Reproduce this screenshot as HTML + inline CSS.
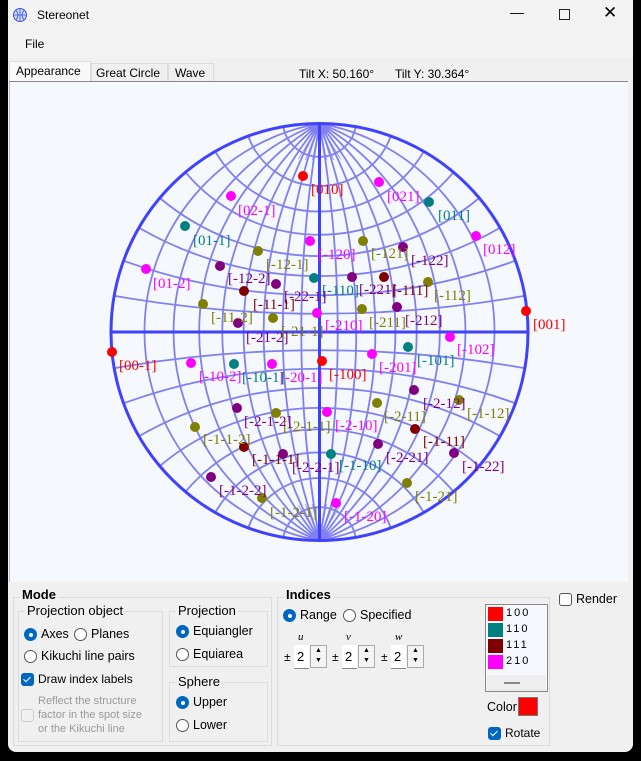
<!DOCTYPE html>
<html><head><meta charset="utf-8"><style>
*{margin:0;padding:0;box-sizing:border-box}
body{width:641px;height:761px;background:#000;position:relative;overflow:hidden;font-family:"Liberation Sans",sans-serif;font-size:12px;color:#000}
.a{position:absolute;white-space:nowrap}
.win{position:absolute;left:8px;top:0;width:625px;height:752px;background:#f0f0f0;border-radius:0 0 8px 8px}
.rad{position:absolute;width:13px;height:13px;border:1px solid #555;border-radius:50%;background:#fff}
.rad.on{background:#0067c0;border-color:#0067c0}
.rad.on::after{content:"";position:absolute;left:3.5px;top:3.5px;width:4px;height:4px;border-radius:50%;background:#fff}
.chk{position:absolute;width:13px;height:13px;border-radius:3px;background:#0067c0}
.chk::after{content:"";position:absolute;left:4px;top:2px;width:3px;height:6px;border:solid #fff;border-width:0 1.3px 1.3px 0;transform:rotate(45deg)}
.grp{position:absolute;border:1px solid #dcdcdc}
.lg{position:absolute;background:#f0f0f0;padding:0 2px;font-size:13px}
.sp{position:absolute;width:15px;height:24px;background:#fff;border-bottom:1px solid #888;font-size:13px;padding:4px 0 0 3px}
.sb{position:absolute;width:17px;height:23px;border:1px solid #aaa;background:#f4f4f4;font-size:7px;text-align:center;line-height:10px}
</style></head><body>
<div class="win"></div>
<div class="a" style="left:8px;top:0;width:625px;height:58px;background:#f3f3f3"></div>
<svg class="a" style="left:12px;top:7px" width="16" height="16" viewBox="0 0 16 16"><circle cx="8" cy="8" r="6.5" fill="#c8d8ff" stroke="#4055d0"/><path d="M8 1.5V14.5M1.5 8H14.5M4 3.5Q8 8 4 12.5M12 3.5Q8 8 12 12.5" stroke="#4055d0" fill="none" stroke-width=".8"/></svg>
<div class="a" style="left:37px;top:8px;font-size:12px">Stereonet</div>
<div class="a" style="left:510px;top:4px;font-size:14px">&#8212;</div>
<div class="a" style="left:559px;top:9px;width:11px;height:11px;border:1px solid #222"></div>
<div class="a" style="left:603px;top:3px;font-size:17px">&#10005;</div>
<div class="a" style="left:25px;top:37px;font-size:12px">File</div>
<div class="a" style="left:9px;top:61px;width:82px;height:21px;background:#f9f9f9;border:1px solid #ddd;border-bottom:none"></div>
<div class="a" style="left:16px;top:64px;font-size:12px">Appearance</div>
<div class="a" style="left:91px;top:63px;width:77px;height:18px;border:1px solid #ddd;border-bottom:none"></div>
<div class="a" style="left:96px;top:66px">Great Circle</div>
<div class="a" style="left:168px;top:63px;width:46px;height:18px;border:1px solid #ddd;border-bottom:none"></div>
<div class="a" style="left:175px;top:66px">Wave</div>
<div class="a" style="left:299px;top:67px">Tilt X: 50.160°</div>
<div class="a" style="left:395px;top:67px">Tilt Y: 30.364°</div>
<div class="a" style="left:9px;top:81px;width:619px;height:501px;background:#f5f8fd;border-top:1px solid #888;border-left:1px solid #bbb"></div>
<svg class="a" style="left:0;top:0" width="641" height="600">
<g transform="translate(319.5,332)" fill="none" stroke="#8080f0" stroke-width="1.8">
<path d="M0,-208.5A1200.7,1200.7 0 0 1 0,208.5M0,-208.5A609.6,609.6 0 0 1 0,208.5M0,-208.5A417,417 0 0 1 0,208.5M0,-208.5A324.4,324.4 0 0 1 0,208.5M0,-208.5A272.2,272.2 0 0 1 0,208.5M0,-208.5A240.8,240.8 0 0 1 0,208.5M0,-208.5A221.9,221.9 0 0 1 0,208.5M0,-208.5A211.7,211.7 0 0 1 0,208.5"/>
<path d="M0,-208.5A1200.7,1200.7 0 0 0 0,208.5M0,-208.5A609.6,609.6 0 0 0 0,208.5M0,-208.5A417,417 0 0 0 0,208.5M0,-208.5A324.4,324.4 0 0 0 0,208.5M0,-208.5A272.2,272.2 0 0 0 0,208.5M0,-208.5A240.8,240.8 0 0 0 0,208.5M0,-208.5A221.9,221.9 0 0 0 0,208.5M0,-208.5A211.7,211.7 0 0 0 0,208.5"/>
<path d="M-36.2,205.3A36.8,36.8 0 0 1 36.2,205.3M-71.3,195.9A75.9,75.9 0 0 1 71.3,195.9M-104.25,180.6A120.4,120.4 0 0 1 104.25,180.6M-134,159.7A175,175 0 0 1 134,159.7M-159.7,134A248.5,248.5 0 0 1 159.7,134M-180.6,104.25A361.1,361.1 0 0 1 180.6,104.25M-195.9,71.3A572.9,572.9 0 0 1 195.9,71.3M-205.3,36.2A1182.5,1182.5 0 0 1 205.3,36.2"/>
<path d="M-36.2,-205.3A36.8,36.8 0 0 0 36.2,-205.3M-71.3,-195.9A75.9,75.9 0 0 0 71.3,-195.9M-104.25,-180.6A120.4,120.4 0 0 0 104.25,-180.6M-134,-159.7A175,175 0 0 0 134,-159.7M-159.7,-134A248.5,248.5 0 0 0 159.7,-134M-180.6,-104.25A361.1,361.1 0 0 0 180.6,-104.25M-195.9,-71.3A572.9,572.9 0 0 0 195.9,-71.3M-205.3,-36.2A1182.5,1182.5 0 0 0 205.3,-36.2"/>
<path stroke-width=".7" d="M0,-208.5L-14,-172M0,-208.5L-7,-172M0,-208.5L7,-172M0,-208.5L14,-172M0,-208.5L-21,-173M0,-208.5L21,-173M0,208.5L-14,172M0,208.5L-7,172M0,208.5L7,172M0,208.5L14,172M0,208.5L-21,173M0,208.5L21,173"/>
<circle r="208.5" stroke="#4040ff" stroke-width="3"/>
<path d="M-208.5,0H208.5M0,-208.5V208.5" stroke="#4040ff" stroke-width="3"/>
</g>
<g>
<circle cx="303" cy="176" r="5" fill="#f00"/><circle cx="526" cy="311" r="5" fill="#f00"/><circle cx="112" cy="352" r="5" fill="#f00"/><circle cx="322" cy="361" r="5" fill="#f00"/>
<g fill="#f0f"><circle cx="379" cy="182" r="5"/><circle cx="231" cy="196" r="5"/><circle cx="476" cy="236" r="5"/><circle cx="310" cy="241" r="5"/><circle cx="146" cy="269" r="5"/><circle cx="317" cy="313" r="5"/><circle cx="450" cy="337" r="5"/><circle cx="372" cy="354" r="5"/><circle cx="191" cy="363" r="5"/><circle cx="272" cy="364" r="5"/><circle cx="327" cy="412" r="5"/><circle cx="336" cy="503" r="5"/></g>
<g fill="#008080"><circle cx="429" cy="202" r="5"/><circle cx="185" cy="226" r="5"/><circle cx="314" cy="278" r="5"/><circle cx="408" cy="347" r="5"/><circle cx="234" cy="364" r="5"/><circle cx="331" cy="454" r="5"/></g>
<g fill="#808000"><circle cx="363" cy="241" r="5"/><circle cx="258" cy="251" r="5"/><circle cx="428" cy="282" r="5"/><circle cx="203" cy="304" r="5"/><circle cx="362" cy="309" r="5"/><circle cx="273" cy="318" r="5"/><circle cx="459" cy="400" r="5"/><circle cx="377" cy="403" r="5"/><circle cx="276" cy="413" r="5"/><circle cx="195" cy="427" r="5"/><circle cx="407" cy="483" r="5"/><circle cx="262" cy="498" r="5"/></g>
<g fill="#800080"><circle cx="403" cy="247" r="5"/><circle cx="220" cy="266" r="5"/><circle cx="276" cy="284" r="5"/><circle cx="352" cy="277" r="5"/><circle cx="397" cy="307" r="5"/><circle cx="238" cy="323" r="5"/><circle cx="414" cy="390" r="5"/><circle cx="237" cy="408" r="5"/><circle cx="283" cy="454" r="5"/><circle cx="378" cy="444" r="5"/><circle cx="454" cy="453" r="5"/><circle cx="211" cy="477" r="5"/></g>
<g fill="#800000"><circle cx="384" cy="277" r="5"/><circle cx="244" cy="291" r="5"/><circle cx="415" cy="429" r="5"/><circle cx="244" cy="447" r="5"/></g>
</g>
<g font-family="Liberation Serif,serif" font-size="15" dominant-baseline="central">
<g fill="#f00"><text x="311" y="190">[010]</text><text x="533" y="325">[001]</text><text x="119" y="366">[00-1]</text><text x="329" y="375">[-100]</text></g>
<g fill="#f0f"><text x="387" y="197">[021]</text><text x="238" y="211">[02-1]</text><text x="483" y="250">[012]</text><text x="318" y="255">[-120]</text><text x="153" y="284">[01-2]</text><text x="325" y="326">[-210]</text><text x="457" y="350">[-102]</text><text x="379" y="368">[-201]</text><text x="199" y="377">[-10-2]</text><text x="280" y="378">[-20-1]</text><text x="335" y="426">[-2-10]</text><text x="344" y="517">[-1-20]</text></g>
<g fill="#008080"><text x="438" y="216">[011]</text><text x="193" y="241">[01-1]</text><text x="322" y="291">[-110]</text><text x="417" y="361">[-101]</text><text x="242" y="378">[-10-1]</text><text x="339" y="466">[-1-10]</text></g>
<g fill="#808000"><text x="371" y="254">[-121]</text><text x="266" y="265">[-12-1]</text><text x="434" y="296">[-112]</text><text x="211" y="318">[-11-2]</text><text x="369" y="323">[-211]</text><text x="281" y="332">[-21-1]</text><text x="467" y="414">[-1-12]</text><text x="384" y="417">[-2-11]</text><text x="283" y="427">[-2-1-1]</text><text x="203" y="440">[-1-1-2]</text><text x="415" y="497">[-1-21]</text><text x="270" y="513">[-1-2-1]</text></g>
<g fill="#800080"><text x="411" y="261">[-122]</text><text x="228" y="279">[-12-2]</text><text x="359" y="290">[-221]</text><text x="284" y="297">[-22-1]</text><text x="405" y="321">[-212]</text><text x="246" y="338">[-21-2]</text><text x="423" y="404">[-2-12]</text><text x="244" y="422">[-2-1-2]</text><text x="292" y="468">[-2-2-1]</text><text x="386" y="458">[-2-21]</text><text x="462" y="467">[-1-22]</text><text x="219" y="491">[-1-2-2]</text></g>
<g fill="#800000"><text x="392" y="291">[-111]</text><text x="253" y="305">[-11-1]</text><text x="423" y="442">[-1-11]</text><text x="252" y="460">[-1-1-1]</text></g>
</g>
</svg>
<!-- bottom panel -->
<div class="grp" style="left:13px;top:597px;width:259px;height:149px"></div>
<div class="lg" style="left:20px;top:587px;font-weight:bold">Mode</div>
<div class="grp" style="left:18px;top:611px;width:145px;height:131px"></div>
<div class="lg" style="left:25px;top:603px">Projection object</div>
<div class="rad on" style="left:24px;top:628px"></div><div class="a" style="left:41px;top:627px;font-size:12.5px">Axes</div>
<div class="rad" style="left:74px;top:628px"></div><div class="a" style="left:91px;top:627px;font-size:12.5px">Planes</div>
<div class="rad" style="left:24px;top:650px"></div><div class="a" style="left:41px;top:649px;font-size:12.5px">Kikuchi line pairs</div>
<div class="chk" style="left:21px;top:673px"></div><div class="a" style="left:38px;top:672px">Draw index labels</div>
<div class="a" style="left:21px;top:709px;width:13px;height:13px;border:1px solid #ccc;border-radius:3px"></div>
<div class="a" style="left:38px;top:694px;color:#999;font-size:11px;line-height:14px">Reflect the structure<br>factor in the spot size<br>or the Kikuchi line</div>
<div class="grp" style="left:169px;top:611px;width:99px;height:56px"></div>
<div class="lg" style="left:176px;top:603px">Projection</div>
<div class="rad on" style="left:176px;top:625px"></div><div class="a" style="left:193px;top:624px;font-size:12.5px">Equiangler</div>
<div class="rad" style="left:176px;top:648px"></div><div class="a" style="left:193px;top:647px;font-size:12.5px">Equiarea</div>
<div class="grp" style="left:169px;top:682px;width:99px;height:60px"></div>
<div class="lg" style="left:176px;top:674px">Sphere</div>
<div class="rad on" style="left:176px;top:696px"></div><div class="a" style="left:193px;top:695px;font-size:12.5px">Upper</div>
<div class="rad" style="left:176px;top:719px"></div><div class="a" style="left:193px;top:718px;font-size:12.5px">Lower</div>
<div class="grp" style="left:277px;top:597px;width:273px;height:149px"></div>
<div class="lg" style="left:284px;top:587px;font-weight:bold">Indices</div>
<div class="rad on" style="left:283px;top:609px"></div><div class="a" style="left:300px;top:608px;font-size:12.5px">Range</div>
<div class="rad" style="left:343px;top:609px"></div><div class="a" style="left:360px;top:608px;font-size:12.5px">Specified</div>
<div class="a" style="left:298px;top:631px;font-family:'Liberation Serif',serif;font-style:italic;font-size:11px">u</div>
<div class="a" style="left:346px;top:631px;font-family:'Liberation Serif',serif;font-style:italic;font-size:11px">v</div>
<div class="a" style="left:395px;top:631px;font-family:'Liberation Serif',serif;font-style:italic;font-size:11px">w</div>
<div class="a" style="left:284px;top:650px">±</div><div class="sp" style="left:294px;top:645px">2</div><div class="sb" style="left:310px;top:645px">▲<br>▼</div>
<div class="a" style="left:332px;top:650px">±</div><div class="sp" style="left:342px;top:645px">2</div><div class="sb" style="left:358px;top:645px">▲<br>▼</div>
<div class="a" style="left:381px;top:650px">±</div><div class="sp" style="left:391px;top:645px">2</div><div class="sb" style="left:407px;top:645px">▲<br>▼</div>
<div class="a" style="left:485px;top:604px;width:63px;height:88px;border:1px solid #888;background:#f5f8fd"></div>
<div class="a" style="left:487px;top:675px;width:59px;height:16px;background:#eee"></div>
<div class="a" style="left:504px;top:682px;width:16px;height:2px;background:#888"></div>
<div class="a" style="left:488px;top:607px;width:15px;height:14px;background:#f00"></div><div class="a" style="left:506px;top:607px;font-size:11px;letter-spacing:2px">100</div>
<div class="a" style="left:488px;top:623px;width:15px;height:14px;background:#008080"></div><div class="a" style="left:506px;top:623px;font-size:11px;letter-spacing:2px">110</div>
<div class="a" style="left:488px;top:639px;width:15px;height:14px;background:#800000"></div><div class="a" style="left:506px;top:639px;font-size:11px;letter-spacing:2px">111</div>
<div class="a" style="left:488px;top:655px;width:15px;height:14px;background:#f0f"></div><div class="a" style="left:506px;top:655px;font-size:11px;letter-spacing:2px">210</div>
<div class="a" style="left:487px;top:700px;font-size:12.5px">Color</div>
<div class="a" style="left:518px;top:697px;width:20px;height:19px;background:#f00;border:1px solid #777"></div>
<div class="chk" style="left:488px;top:727px"></div><div class="a" style="left:505px;top:726px">Rotate</div>
<div class="a" style="left:559px;top:593px;width:13px;height:13px;border:1px solid #555;border-radius:3px;background:#fff"></div>
<div class="a" style="left:576px;top:592px;font-size:12.5px">Render</div>
</body></html>
